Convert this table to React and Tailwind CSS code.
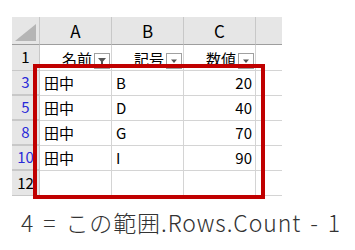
const cols = ['A', 'B', 'C'];

const rows = [
  { n: '3', name: '田中', code: 'B', value: 20 },
  { n: '5', name: '田中', code: 'D', value: 40 },
  { n: '8', name: '田中', code: 'G', value: 70 },
  { n: '10', name: '田中', code: 'I', value: 90 },
];

const font = { fontFamily: '"Noto Sans CJK JP", "Noto Sans", sans-serif' };

function FilterButton({ active }) {
  return (
    <span className="w-[16px] h-[16px] border border-[#a0a0a0] bg-white flex items-center justify-center shrink-0">
      {active ? (
        <svg width="10" height="10" viewBox="0 0 10 10">
          <path d="M1 2h8L6 5.5V9H4V5.5z" fill="#555" />
        </svg>
      ) : (
        <svg width="8" height="6" viewBox="0 0 8 6">
          <path d="M1 1.5h6L4 5z" fill="#555" />
        </svg>
      )}
    </span>
  );
}

function HeadCell({ label, active }) {
  return (
    <div className="h-[26px] border-r border-b border-[#d4d4d4] flex items-end justify-end gap-[2px] pr-[1px] pb-[1px]">
      <span className="text-[15px] leading-[20px] text-black">{label}</span>
      <FilterButton active={active} />
    </div>
  );
}

export default function App() {
  return (
    <div className="w-[355px] h-[250px] bg-white overflow-hidden" style={font}>
      <div className="pt-[17px] pl-[12px]">
        <div className="relative w-[270px]">
          <div className="grid grid-cols-[28px_72px_72px_72px_26px]">
            {/* column headers */}
            <div className="h-[28px] bg-[#e6e6e6] border-r border-b border-r-[#c8c8c8] border-b-[#9e9e9e] flex items-end justify-end p-[3px]">
              <svg width="21" height="17" viewBox="0 0 21 17">
                <path d="M21 0V17H0z" fill="#b5b5b5" />
              </svg>
            </div>
            {cols.map((c) => (
              <div
                key={c}
                className="h-[28px] bg-[#e6e6e6] border-r border-b border-r-[#c8c8c8] border-b-[#9e9e9e] flex items-center justify-center text-[17px] text-black"
              >
                {c}
              </div>
            ))}
            <div className="h-[28px] bg-[#e6e6e6] border-b border-[#9e9e9e]" />

            {/* row 1: table headings with filters */}
            <div className="h-[26px] bg-[#e6e6e6] border-r border-b border-[#c8c8c8] flex items-center justify-center text-[15px] text-black">
              1
            </div>
            <HeadCell label="名前" active />
            <HeadCell label="記号" />
            <HeadCell label="数値" />
            <div className="h-[26px] border-b border-[#d4d4d4]" />

            {rows.map((r) => (
              <div key={r.n} className="contents">
                <div className="h-[25px] bg-[#e6e6e6] border-r border-b-2 border-r-[#c8c8c8] border-b-[#c8c8c8] flex items-center justify-center text-[15px] text-[#2a2ad8]">
                  {r.n}
                </div>
                <div className="h-[25px] border-r border-b border-[#d4d4d4] flex items-center pl-[4px] text-[15px] text-black">
                  {r.name}
                </div>
                <div className="h-[25px] border-r border-b border-[#d4d4d4] flex items-center pl-[4px] text-[15px] text-black">
                  {r.code}
                </div>
                <div className="h-[25px] border-r border-b border-[#d4d4d4] flex items-center justify-end pr-[3px] text-[15px] text-black">
                  {r.value}
                </div>
                <div className="h-[25px] border-b border-[#d4d4d4]" />
              </div>
            ))}

            <div className="h-[25px] bg-[#e6e6e6] border-r border-b border-[#c8c8c8] flex items-center justify-center text-[15px] text-black">
              12
            </div>
            <div className="h-[25px] border-r border-b border-[#d4d4d4]" />
            <div className="h-[25px] border-r border-b border-[#d4d4d4]" />
            <div className="h-[25px] border-r border-b border-[#d4d4d4]" />
            <div className="h-[25px] border-b border-[#d4d4d4]" />
          </div>

          {/* highlighted range */}
          <div className="absolute left-[21px] top-[47px] w-[232px] h-[135px] border-4 border-[#c00000]" />
        </div>
      </div>

      <div className="pl-[21px] pt-[11px] text-[23px] leading-[30px] tracking-[0.9px] [word-spacing:3px] text-[#333] font-light">
        4 = この範囲.Rows.Count - 1
      </div>
    </div>
  );
}
